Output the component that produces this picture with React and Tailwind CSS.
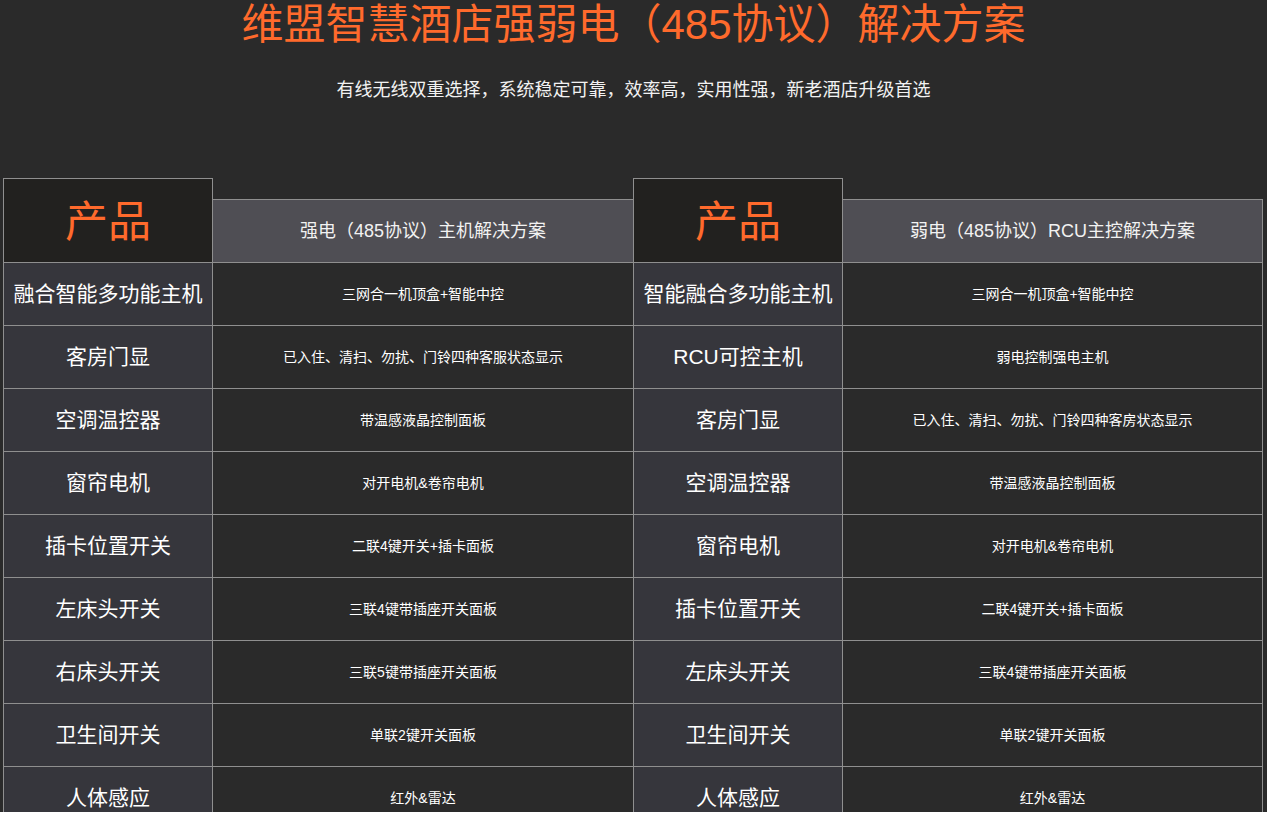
const font = { fontFamily: '"Liberation Sans", "Noto Sans CJK SC", sans-serif' }

const strongRows = [
  ['融合智能多功能主机', '三网合一机顶盒+智能中控'],
  ['客房门显', '已入住、清扫、勿扰、门铃四种客服状态显示'],
  ['空调温控器', '带温感液晶控制面板'],
  ['窗帘电机', '对开电机&卷帘电机'],
  ['插卡位置开关', '二联4键开关+插卡面板'],
  ['左床头开关', '三联4键带插座开关面板'],
  ['右床头开关', '三联5键带插座开关面板'],
  ['卫生间开关', '单联2键开关面板'],
  ['人体感应', '红外&雷达'],
]

const weakRows = [
  ['智能融合多功能主机', '三网合一机顶盒+智能中控'],
  ['RCU可控主机', '弱电控制强电主机'],
  ['客房门显', '已入住、清扫、勿扰、门铃四种客房状态显示'],
  ['空调温控器', '带温感液晶控制面板'],
  ['窗帘电机', '对开电机&卷帘电机'],
  ['插卡位置开关', '二联4键开关+插卡面板'],
  ['左床头开关', '三联4键带插座开关面板'],
  ['卫生间开关', '单联2键开关面板'],
  ['人体感应', '红外&雷达'],
]

function PlanTable({ title, rows, cols, className = '' }) {
  return (
    <div className={`grid ${cols} ${className}`}>
      <div className="flex h-[85px] items-center justify-center border border-[#8f8f8f] bg-[#22211f] pt-[4px] text-[43px] leading-none text-[#ff6a2c]">
        产品
      </div>
      <div className="flex h-[64px] items-center justify-center self-end border-y border-r border-[#8f8f8f] bg-[#4f4e54] text-[18px] text-[#f2f2f2]">
        {title}
      </div>
      {rows.map(([name, desc]) => (
        <div key={name} className="contents">
          <div className="flex h-[63px] items-center justify-center border-x border-b border-[#8f8f8f] bg-[#36363c] text-[21px] text-white">
            {name}
          </div>
          <div className="flex h-[63px] items-center justify-center border-r border-b border-[#8f8f8f] bg-[#2a2a2a] text-[14px] text-white">
            {desc}
          </div>
        </div>
      ))}
    </div>
  )
}

export default function App() {
  return (
    <div className="h-[812px] overflow-hidden bg-[#2a2a2a]" style={font}>
      <h1 className="text-center text-[42px] leading-[50px] text-[#ff6a2c]">
        维盟智慧酒店强弱电（485协议）解决方案
      </h1>
      <p className="mt-[28px] text-center text-[18px] leading-[24px] text-[#f2f2f2]">
        有线无线双重选择，系统稳定可靠，效率高，实用性强，新老酒店升级首选
      </p>

      <section className="mt-[76px] flex pl-[3px]">
        <PlanTable title="强电（485协议）主机解决方案" rows={strongRows} cols="grid-cols-[210px_421px]" />
        <PlanTable
          title="弱电（485协议）RCU主控解决方案"
          rows={weakRows}
          cols="grid-cols-[210px_420px]"
          className="-ml-px"
        />
      </section>
    </div>
  )
}
